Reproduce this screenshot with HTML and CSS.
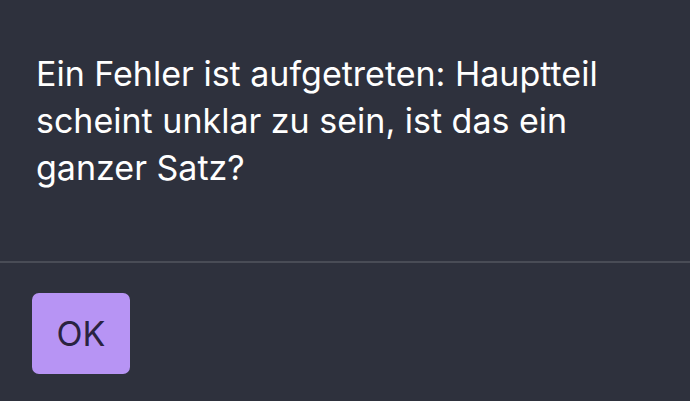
FILE: index.html
```html
<!DOCTYPE html>
<html lang="de">
<head>
<meta charset="utf-8">
<link rel="stylesheet" href="styles.css">
</head>
<body>
<div class="dialog">
  <div class="body">
    <p class="message">Ein Fehler ist aufgetreten: Hauptteil scheint unklar zu sein, ist das ein ganzer Satz?</p>
  </div>
  <div class="footer">
    <button class="ok">OK</button>
  </div>
</div>
</body>
</html>
```
FILE: styles.css
```css
html, body {
  margin: 0;
  padding: 0;
  background: #2e313d;
  height: 100%;
}
.dialog {
  width: 690px;
  height: 401px;
  display: flex;
  flex-direction: column;
  font-family: Inter, "Noto Sans", sans-serif;
}
.body {
  flex: 0 0 auto;
  height: 263px;
  box-sizing: border-box;
  padding: 50px 36px 0 36px;
  border-bottom: 2px solid #494c56;
}
.message {
  margin: 0;
  color: #ffffff;
  font-size: 34px;
  line-height: 47px;
  max-width: 600px;
}
.footer {
  flex: 0 0 auto;
  padding: 30px 32px 0 32px;
}
.ok {
  display: block;
  width: 98px;
  height: 81px;
  border: none;
  border-radius: 7px;
  background: #b794f4;
  color: #2a2340;
  font-family: Inter, "Noto Sans", sans-serif;
  font-size: 34px;
  padding: 0;
}
```
